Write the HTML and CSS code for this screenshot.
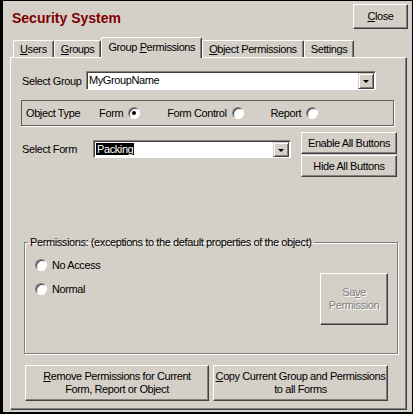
FILE: index.html
```html
<!DOCTYPE html>
<html lang="en">
<head>
    <meta charset="UTF-8">
    <meta name="viewport" content="width=device-width, initial-scale=1.0">
    <title>Security System</title>
    <link rel="stylesheet" href="styles.css">
</head>
<body>
    <div class="window">
        <div class="header">
            <h1 class="title">Security System</h1>
            <button class="btn btn-close"><u>C</u>lose</button>
        </div>

        <div class="tabs">
            <div class="tab"><u>U</u>sers</div>
            <div class="tab"><u>G</u>roups</div>
            <div class="tab tab-active">Group <u>P</u>ermissions</div>
            <div class="tab"><u>O</u>bject Permissions</div>
            <div class="tab">Settings</div>
        </div>

        <div class="panel">
            <div class="row">
                <label class="field-label label-group">Select Group</label>
                <div class="combo combo-group">
                    <span class="combo-text">MyGroupName</span>
                    <span class="combo-arrow"></span>
                </div>
            </div>

            <div class="type-frame">
                <span class="type-label">Object Type</span>
                <span class="type-option first">Form <span class="radio checked"></span></span>
                <span class="type-option">Form Control <span class="radio"></span></span>
                <span class="type-option">Report <span class="radio"></span></span>
            </div>

            <div class="row form-row">
                <label class="field-label label-form">Select Form</label>
                <div class="combo combo-form">
                    <span class="combo-text"><span class="selected">Packing</span></span>
                    <span class="combo-arrow"></span>
                </div>
                <div class="side-buttons">
                    <button class="btn btn-side">Enable All Buttons</button>
                    <button class="btn btn-side">Hide All Buttons</button>
                </div>
            </div>

            <fieldset class="perm-box">
                <legend>Permissions: (exceptions to the default properties of the object)</legend>
                <div class="perm-options">
                    <div class="perm-option"><span class="radio"></span>No Access</div>
                    <div class="perm-option"><span class="radio"></span>Normal</div>
                </div>
                <button class="btn btn-save" disabled>Sa<u>v</u>e<br>Permission</button>
            </fieldset>

            <div class="bottom-buttons">
                <button class="btn btn-remove"><u>R</u>emove Permissions for Current<br>Form, Report or Object</button>
                <button class="btn btn-copy"><u>C</u>opy Current Group and Permissions<br>to all Forms</button>
            </div>
        </div>
    </div>
</body>
</html>
```

FILE: styles.css
```css
:root { --face: #d4d0c8; --shadow: #808080; --dark: #404040; --light: #fff; }
html, body { margin: 0; height: 100%; background: #000; }
body { font-family: "Liberation Sans", Arial, sans-serif; font-size: 11px; letter-spacing: -0.4px; color: #000; white-space: nowrap; }
.window { margin: 1px 1px 2px 3px; height: 411px; background: var(--face); box-sizing: border-box; }

/* header */
.header { display: flex; justify-content: space-between; align-items: flex-start; height: 36px; padding: 3px 4px 0 9px; box-sizing: border-box; }
.title { margin: 6px 0 0; font-size: 14px; line-height: 16px; font-weight: bold; letter-spacing: 0; color: #800000; }

/* buttons */
.btn { font-family: inherit; font-size: 11px; letter-spacing: inherit; color: #000; background: var(--face); border: 1px solid; border-color: var(--light) var(--dark) var(--dark) var(--light); box-shadow: inset -1px -1px 0 var(--shadow); padding: 0; line-height: 13px; cursor: pointer; }
.btn-close { width: 55px; height: 25px; }
.btn-side { width: 96px; height: 22px; }
.btn-save { width: 68px; height: 52px; margin-top: 16px; color: var(--shadow); text-shadow: 1px 1px 0 var(--light); cursor: default; }
.btn-remove { width: 184px; height: 36px; }
.btn-copy { width: 175px; height: 36px; }

/* tabs */
.tabs { display: flex; align-items: flex-end; height: 20px; margin-left: 10px; }
.tab { height: 17px; line-height: 16px; padding: 0 6px; box-sizing: border-box; border: 1px solid; border-bottom: 0; border-color: var(--light) var(--dark) transparent var(--light); border-radius: 2px 2px 0 0; box-shadow: inset -1px 0 0 var(--shadow); }
.tab-active { height: 21px; line-height: 18px; margin-bottom: -1px; position: relative; z-index: 1; background: var(--face); }

/* panel */
.panel { margin-left: 7px; width: 397px; height: 353px; box-sizing: border-box; border: 1px solid; border-color: var(--light) var(--dark) var(--dark) var(--light); box-shadow: inset -1px -1px 0 var(--shadow); padding: 13px 6px 0 11px; }
.row { display: flex; align-items: center; }
.field-label { display: block; }
.label-group { width: 64px; }
.label-form { width: 71px; margin-top: 8px; line-height: 18px; }

.combo { display: flex; align-items: stretch; background: #fff; border: 1px solid; border-color: var(--shadow) var(--light) var(--light) var(--shadow); box-shadow: inset 1px 1px 0 var(--dark); padding: 1px 1px 0 2px; box-sizing: border-box; }
.combo-group { width: 290px; height: 19px; }
.combo-form { width: 198px; height: 18px; margin-top: 8px; }
.combo-text { flex: 1; line-height: 15px; }
.selected { background: #000; color: #fff; padding: 0 1px; }
.combo-arrow { width: 16px; background: var(--face); border: 1px solid; border-color: var(--face) var(--dark) var(--dark) var(--face); box-shadow: inset 1px 1px 0 var(--light), inset -1px -1px 0 var(--shadow); box-sizing: border-box; display: flex; align-items: center; justify-content: center; }
.combo-arrow::after { content: ""; border-left: 3px solid transparent; border-right: 3px solid transparent; border-top: 3px solid #000; margin-top: 1px; }

/* object type */
.type-frame { display: flex; align-items: center; width: 373px; height: 26px; margin: 10px 0 0 -1px; padding-left: 4px; box-sizing: border-box; border: 1px solid #606060; box-shadow: 1px 1px 0 var(--light); }
.type-option { display: flex; align-items: center; gap: 5px; margin-left: 27px; }
.type-option.first { margin-left: 19px; }

.radio { display: inline-block; width: 12px; height: 12px; box-sizing: border-box; border-radius: 50%; background: #fff; border: 1px solid; border-color: var(--shadow) var(--light) var(--light) var(--shadow); box-shadow: inset 1px 1px 0 var(--dark); position: relative; }
.radio.checked::after { content: ""; position: absolute; left: 3px; top: 3px; width: 4px; height: 4px; border-radius: 50%; background: #000; }

/* select form */
.form-row { align-items: flex-start; margin-top: 6px; }
.side-buttons { display: flex; flex-direction: column; gap: 1px; margin-left: 10px; }

/* permissions */
.perm-box { display: flex; justify-content: space-between; align-items: flex-start; width: 374px; height: 118px; margin: 59px 0 0 2px; padding: 8px 9px 0 10px; box-sizing: border-box; border: 1px solid var(--shadow); box-shadow: inset 1px 1px 0 var(--light), 1px 1px 0 var(--light); min-width: 0; }
.perm-box legend { padding: 0 2px; margin-left: -7px; line-height: 13px; }
.perm-options { display: flex; flex-direction: column; gap: 8px; }
.perm-option { display: flex; align-items: center; gap: 5px; height: 16px; }

.bottom-buttons { display: flex; gap: 4px; margin: 11px 0 0 3px; }
```
